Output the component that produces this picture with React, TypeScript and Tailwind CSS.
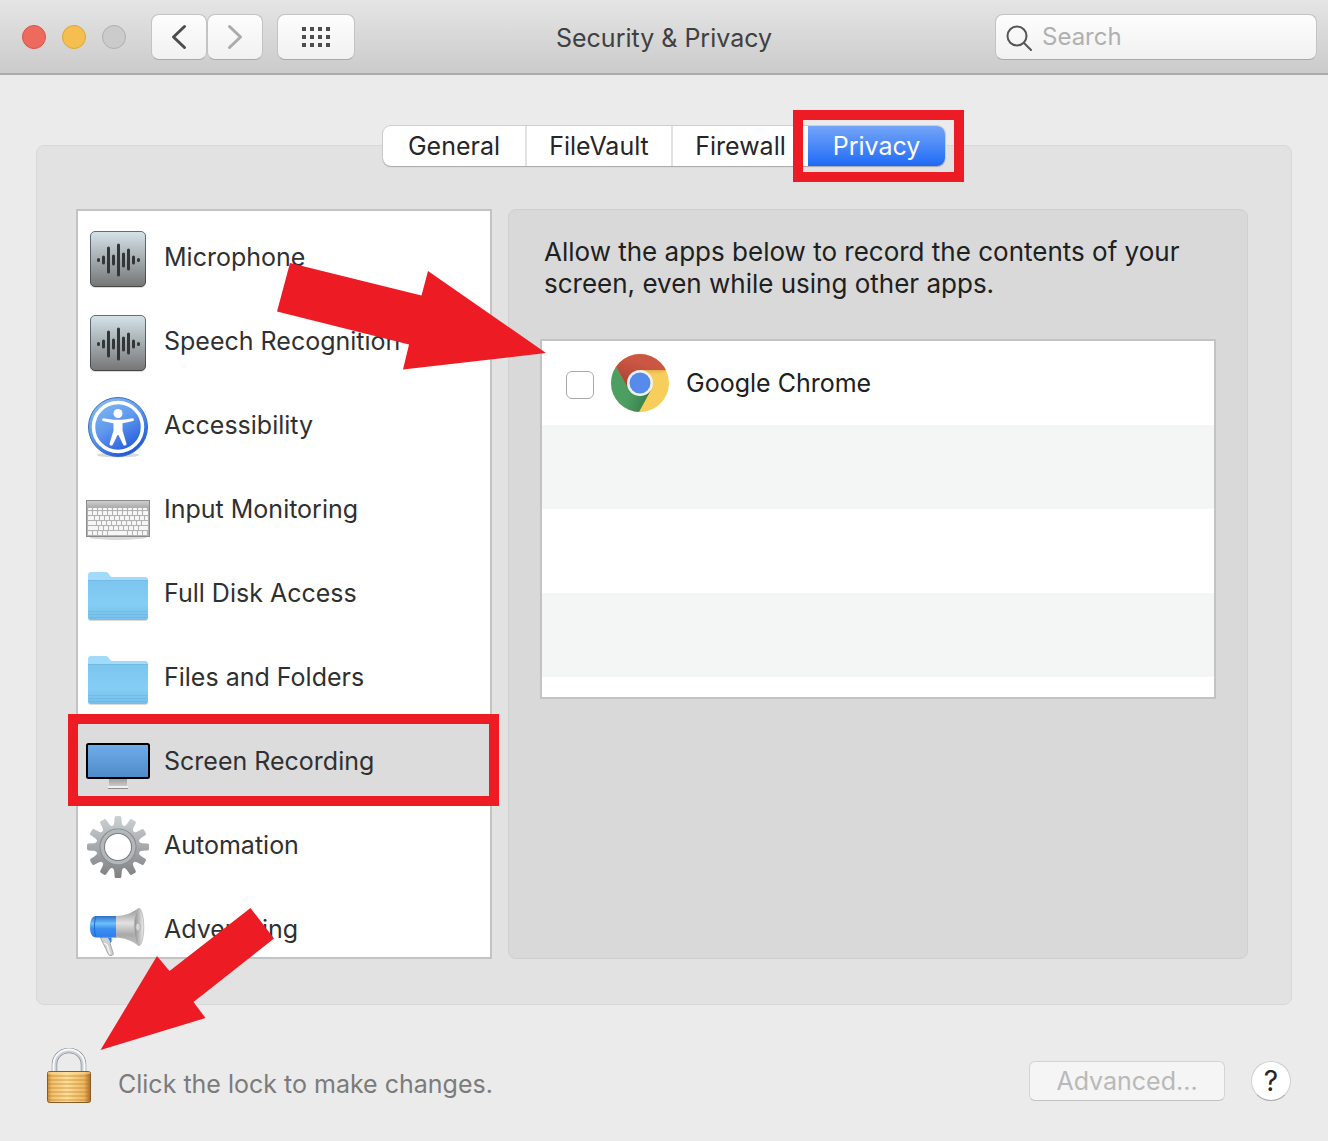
import React, { useState } from 'react';
import clsx from 'clsx';

const tabs = [
  { name: 'General', width: 'w-36' },
  { name: 'FileVault', width: 'w-[146px]' },
  { name: 'Firewall', width: 'w-[135px]' },
  { name: 'Privacy', width: 'w-[137px]' },
];

const WaveIcon = () => (
  <svg viewBox="0 0 64 64" className="h-16 w-16 shrink-0 overflow-visible" aria-hidden="true">
    <defs>
      <linearGradient id="wave-bg" x1="0" y1="0" x2="0" y2="1">
        <stop offset="0" stopColor="#d5e3e9" />
        <stop offset="0.5" stopColor="#a5adb0" />
        <stop offset="1" stopColor="#757575" />
      </linearGradient>
      <linearGradient id="wave-edge" x1="0" y1="0" x2="0" y2="1">
        <stop offset="0" stopColor="#5c7080" />
        <stop offset="1" stopColor="#484848" />
      </linearGradient>
    </defs>
    <rect x="4" y="7" width="56" height="56" rx="5" fill="#000" opacity="0.15" />
    <rect x="4.5" y="6.5" width="55" height="55" rx="4.5" fill="url(#wave-bg)" stroke="url(#wave-edge)" />
    <g stroke="#333638" strokeWidth="3" strokeLinecap="round">
      <path d="M12.5 34.5v1M17.5 32v6M22.500 23v24M27.500 31v8M32.500 20v30M37.500 29v12M42.500 25v19M47.500 32v6M52.500 34.500v1" />
    </g>
  </svg>
);

const AccessibilityIcon = () => (
  <svg viewBox="0 0 64 64" className="h-16 w-16 shrink-0 overflow-visible" aria-hidden="true">
    <defs>
      <linearGradient id="acc-bg" x1="0.2" y1="0" x2="0.8" y2="1">
        <stop offset="0" stopColor="#86bcf3" />
        <stop offset="0.45" stopColor="#5f98ed" />
        <stop offset="1" stopColor="#164bd8" />
      </linearGradient>
    </defs>
    <ellipse cx="32" cy="62" rx="21" ry="2.500" fill="#000" opacity="0.15" />
    <circle cx="32" cy="34" r="29.500" fill="url(#acc-bg)" stroke="#3b6fb9" />
    <circle cx="32" cy="34" r="24.500" fill="none" stroke="#fff" strokeWidth="3.500" />
    <circle cx="32" cy="20.500" r="4.500" fill="#fff" />
    <path
      d="M17.500 25.200c4 .8 8 1.500 14.500 1.500s10.500-.7 14.500-1.500c1.500-.2 2 2.400.4 2.800-3.500 1-7 1.500-10.400 2.200v7.300l4 13.200c.4 1.800-2.500 2.700-3.300 1L32.500 42h-1l-4.700 9.700c-.8 1.700-3.700.8-3.300-1l4-13.200v-7.300c-3.400-.7-6.900-1.200-10.400-2.200-1.600-.4-1.100-3 .4-2.800z"
      fill="#fff"
    />
  </svg>
);

const keyRows = [
  { y: 31, h: 2, widths: [4, 4, 4, 4, 4, 4, 4, 4, 4, 4, 4, 4, 4] },
  { y: 34, h: 4, widths: [4, 4, 4, 4, 4, 4, 4, 4, 4, 4, 4, 9] },
  { y: 39, h: 4, widths: [6, 4, 4, 4, 4, 4, 4, 4, 4, 4, 4, 7] },
  { y: 44, h: 4, widths: [8, 4, 4, 4, 4, 4, 4, 4, 4, 4, 10] },
  { y: 49, h: 4, widths: [10, 4, 4, 4, 4, 4, 4, 4, 4, 13] },
  { y: 54, h: 4, widths: [4, 4, 4, 4, 19, 4, 4, 4, 4] },
];

const KeyboardIcon = () => (
  <svg viewBox="0 0 64 64" className="h-16 w-16 shrink-0 overflow-visible" aria-hidden="true">
    <defs>
      <linearGradient id="kb-bg" x1="0" y1="0" x2="0" y2="1">
        <stop offset="0" stopColor="#d2d2d2" />
        <stop offset="0.17" stopColor="#b0b0b0" />
        <stop offset="1" stopColor="#b4b4b4" />
      </linearGradient>
    </defs>
    <ellipse cx="32" cy="60" rx="29" ry="3" fill="#000" opacity="0.15" />
    <rect x="0.500" y="23.500" width="63" height="36" fill="url(#kb-bg)" stroke="#8b8b8b" />
    {keyRows.map((row) => {
      let x = 2;
      return row.widths.map((w, i) => {
        const left = x;
        x += w + 1;
        return (
          <rect key={`${row.y}-${i}`} x={left} y={row.y} width={Math.min(w, 62 - left)} height={row.h} rx="0.600" fill="#f6f6f6" />
        );
      });
    })}
  </svg>
);

const FolderIcon = () => (
  <svg viewBox="0 0 64 64" className="h-16 w-16 shrink-0 overflow-visible" aria-hidden="true">
    <defs>
      <linearGradient id="folder-front" x1="0" y1="0" x2="0" y2="1">
        <stop offset="0" stopColor="#7cc5ef" />
        <stop offset="0.6" stopColor="#84cdf5" />
        <stop offset="1" stopColor="#75bfe9" />
      </linearGradient>
    </defs>
    <rect x="2" y="20" width="60" height="40" rx="3" fill="#000" opacity="0.15" />
    <path d="M2 14a3 3 0 0 1 3-3h14c2 0 2.800.6 3.800 2l1.200 1.800c.7 1 1.300 1.200 2.500 1.200H59a3 3 0 0 1 3 3v6H2z" fill="#a2daf9" />
    <path d="M2 19h60v37a3 3 0 0 1-3 3H5a3 3 0 0 1-3-3z" fill="url(#folder-front)" />
    <path d="M2 19.500h60M2.500 50.500h59M2.500 53.500h59M3 56.500h58" stroke="#62add8" strokeWidth="0.700" opacity="0.600" />
  </svg>
);

const MonitorIcon = () => (
  <svg viewBox="0 0 64 64" className="h-16 w-16 shrink-0 overflow-visible" aria-hidden="true">
    <defs>
      <linearGradient id="screen" x1="0" y1="0" x2="0" y2="1">
        <stop offset="0" stopColor="#71adea" />
        <stop offset="1" stopColor="#4d8ac8" />
      </linearGradient>
      <linearGradient id="stand" x1="0" y1="0" x2="0" y2="1">
        <stop offset="0" stopColor="#9a9a9a" />
        <stop offset="1" stopColor="#cfcfcf" />
      </linearGradient>
    </defs>
    <rect x="23" y="49" width="18" height="9" fill="url(#stand)" />
    <rect x="22" y="57" width="20" height="2" fill="#f2f2f2" />
    <rect x="22" y="59" width="20" height="1" fill="#8e8e8e" />
    <rect x="1" y="15" width="62" height="34" rx="1.500" fill="url(#screen)" stroke="#000" strokeWidth="2" />
  </svg>
);

const teeth = [0, 30, 60, 90, 120, 150, 180, 210, 240, 270, 300, 330];

const GearIcon = () => (
  <svg viewBox="0 0 64 64" className="h-16 w-16 shrink-0 overflow-visible" aria-hidden="true">
    <defs>
      <linearGradient id="gear-fill" gradientUnits="userSpaceOnUse" x1="0" y1="3" x2="0" y2="65">
        <stop offset="0" stopColor="#ccd2d4" />
        <stop offset="0.5" stopColor="#a6a9ab" />
        <stop offset="1" stopColor="#7d7f81" />
      </linearGradient>
      <mask id="gear-mask" maskUnits="userSpaceOnUse" x="-2" y="0" width="68" height="68">
        <circle cx="32" cy="34" r="22" fill="#fff" />
        {teeth.map((angle) => (
          <path
            key={angle}
            d="M26 13.500Q28 12.500 28.200 10l.4-5.500Q28.800 3 30 3h4q1.200 0 1.400 1.500l.4 5.500q.2 2.500 2.200 3.500z"
            fill="#fff"
            transform={`rotate(${angle} 32 34)`}
          />
        ))}
        <circle cx="32" cy="34" r="13" fill="#000" />
      </mask>
    </defs>
    <g mask="url(#gear-mask)">
      <rect x="-2" y="0" width="68" height="68" fill="url(#gear-fill)" />
      <circle cx="32" cy="34" r="18" fill="none" stroke="#8b9092" strokeWidth="1.200" />
      <circle cx="32" cy="34" r="15.500" fill="none" stroke="#b3b7b9" strokeWidth="3.500" />
      <circle cx="32" cy="34" r="13.400" fill="none" stroke="#787c7e" strokeWidth="1.200" />
    </g>
  </svg>
);

const MegaphoneIcon = () => (
  <svg viewBox="0 0 64 64" className="h-16 w-16 shrink-0 overflow-visible" aria-hidden="true">
    <defs>
      <linearGradient id="mega-blue" x1="0" y1="0" x2="0" y2="1">
        <stop offset="0" stopColor="#2f6fcb" />
        <stop offset="0.35" stopColor="#6cc0fa" />
        <stop offset="0.6" stopColor="#3b8df0" />
        <stop offset="1" stopColor="#2c7fee" />
      </linearGradient>
      <linearGradient id="mega-cone" x1="0" y1="0" x2="0" y2="1">
        <stop offset="0" stopColor="#8f8f8f" />
        <stop offset="0.4" stopColor="#e2e2e2" />
        <stop offset="0.7" stopColor="#a9a9a9" />
        <stop offset="1" stopColor="#c4c4c4" />
      </linearGradient>
      <linearGradient id="mega-bell" x1="0" y1="0" x2="1" y2="0">
        <stop offset="0" stopColor="#8d8d8d" />
        <stop offset="1" stopColor="#ededed" />
      </linearGradient>
    </defs>
    <path d="M14 40h11l1 4-2 2 3.500 11c-1 2-4 2.200-5 .6L17 46z" fill="#cfcfcf" stroke="#8f8f8f" strokeWidth="0.700" />
    <path d="M22 41h3v5z" fill="#2c7fee" />
    <path d="M18 46l3 2 3 9" fill="none" stroke="#f4f4f4" strokeWidth="1.500" />
    <path d="M10 19h21v21.500H10c-4 0-6-4-6-10.500s2-11 6-11z" fill="url(#mega-blue)" />
    <path d="M10 19.500c-2 4-2 17 0 20.500" fill="none" stroke="#1d5db8" strokeWidth="0.800" />
    <path d="M30 19c8 0 16-3 23-8v38c-7-5-15-8.500-23-8.500z" fill="url(#mega-cone)" />
    <ellipse cx="53" cy="30" rx="4.800" ry="18.700" fill="url(#mega-bell)" stroke="#b9b9b9" strokeWidth="0.800" />
    <ellipse cx="52" cy="30" rx="2.300" ry="4" fill="#d8d8d8" stroke="#999" strokeWidth="0.600" />
  </svg>
);

const ChromeIcon = () => (
  <svg viewBox="0 0 58 58" className="h-[58px] w-[58px] shrink-0" aria-hidden="true">
    <defs>
      <clipPath id="chrome-clip">
        <circle cx="29" cy="29" r="29" />
      </clipPath>
      <linearGradient id="chrome-yellow-shade" x1="0" y1="0" x2="0" y2="1">
        <stop offset="0" stopColor="#c88d31" stopOpacity="0.450" />
        <stop offset="0.6" stopColor="#f7cd5c" stopOpacity="0" />
      </linearGradient>
      <linearGradient id="chrome-red" x1="0.600" y1="0.300" x2="0.250" y2="1">
        <stop offset="0" stopColor="#cb5644" />
        <stop offset="1" stopColor="#a93f31" />
      </linearGradient>
      <linearGradient id="chrome-green" x1="0.500" y1="0.500" x2="1" y2="0.700">
        <stop offset="0" stopColor="#4d9e62" />
        <stop offset="1" stopColor="#357d49" />
      </linearGradient>
    </defs>
    <g clipPath="url(#chrome-clip)">
      <rect width="58" height="58" fill="#f7cd5c" />
      <path d="M29 16h27l-16 10z" fill="url(#chrome-yellow-shade)" />
      <path d="M0 4L5 13l13 22 11 7 11-6-12 22H0z" fill="url(#chrome-green)" />
      <path d="M5 13L0 4V0h58v16H29L18 32l-1 2z" fill="url(#chrome-red)" />
    </g>
    <circle cx="29" cy="29" r="13" fill="#f1f1f1" />
    <circle cx="29" cy="29" r="10.500" fill="#568bec" />
  </svg>
);

const LockIcon = () => (
  <svg viewBox="0 0 46 66" className="h-[66px] w-[46px]" aria-hidden="true">
    <defs>
      <linearGradient id="lock-body" x1="0" y1="0" x2="1" y2="0">
        <stop offset="0" stopColor="#c98c3a" />
        <stop offset="0.100" stopColor="#f3c069" />
        <stop offset="0.450" stopColor="#fddd96" />
        <stop offset="0.850" stopColor="#efb95e" />
        <stop offset="1" stopColor="#a86d29" />
      </linearGradient>
    </defs>
    <path d="M8.500 25V16.500a14.500 14 0 0 1 29 0V25" fill="none" stroke="#8a9095" strokeWidth="5.500" />
    <path d="M8.500 25V16.500a14.500 14 0 0 1 29 0V25" fill="none" stroke="#cbd2d8" strokeWidth="4" />
    <path d="M7.500 25V16.500a15.500 15 0 0 1 31 0V25" fill="none" stroke="#f8fafb" strokeWidth="2" />
    <rect x="1.500" y="23.500" width="43" height="31" rx="2" fill="url(#lock-body)" stroke="#8c5a24" />
    <path d="M2 28h42M2 32h42M2 36h42M2 40h42M2 44h42M2 48h42M2 52h42" stroke="#b3762a" strokeWidth="1.200" opacity="0.600" />
    <path d="M2 25h42" stroke="#fbe0a6" />
  </svg>
);

const categories = [
  { name: 'Microphone', icon: WaveIcon },
  { name: 'Speech Recognition', icon: WaveIcon },
  { name: 'Accessibility', icon: AccessibilityIcon },
  { name: 'Input Monitoring', icon: KeyboardIcon },
  { name: 'Full Disk Access', icon: FolderIcon },
  { name: 'Files and Folders', icon: FolderIcon },
  { name: 'Screen Recording', icon: MonitorIcon },
  { name: 'Automation', icon: GearIcon },
  { name: 'Advertising', icon: MegaphoneIcon },
];

const toolbarButton =
  'flex h-[46px] items-center justify-center rounded-lg border border-[#c3c3c3] border-b-[#a9a9a9] bg-linear-to-b from-[#fdfdfd] to-[#f1f1f1]';

const TitleBar: React.FC = () => {
  const [query, setQuery] = useState('');

  return (
    <header className="grid h-[75px] grid-cols-[1fr_auto_1fr] items-center border-b-2 border-[#ababab] bg-linear-to-b from-[#e5e5e5] to-[#cbcbcb] px-[11px]">
      <div className="flex items-center pl-[11px]">
        <div className="flex gap-4">
          <button aria-label="Close" className="h-6 w-6 rounded-full border border-[#d6544a] bg-[#ed6a5f]" />
          <button aria-label="Minimize" className="h-6 w-6 rounded-full border border-[#dba53d] bg-[#f5bf4f]" />
          <button aria-label="Zoom" disabled className="h-6 w-6 rounded-full border border-[#afafaf] bg-[#cbcbcb]" />
        </div>
        <div className="ml-[25px] flex">
          <button aria-label="Back" className={clsx(toolbarButton, 'w-14')}>
            <svg width="16" height="26" viewBox="0 0 16 26" fill="none" stroke="#4d4d4d" strokeWidth="3" strokeLinecap="round" strokeLinejoin="round">
              <path d="M13.500 2.500L2.500 13l11 10.500" />
            </svg>
          </button>
          <button aria-label="Forward" className={clsx(toolbarButton, 'w-14')}>
            <svg width="16" height="26" viewBox="0 0 16 26" fill="none" stroke="#ababab" strokeWidth="3" strokeLinecap="round" strokeLinejoin="round">
              <path d="M2.500 2.500L13.500 13l-11 10.500" />
            </svg>
          </button>
        </div>
        <button aria-label="Show All" className={clsx(toolbarButton, 'ml-[14px] w-[78px]')}>
          <svg width="28" height="20" viewBox="0 0 28 20" fill="#4d4d4d">
            {[0, 8, 16].map((y) => [0, 8, 16, 24].map((x) => <rect key={`${x}-${y}`} x={x} y={y} width="4" height="4" />))}
          </svg>
        </button>
      </div>

      <h1 className="pt-1 text-[25px] text-[#404040]">Security &amp; Privacy</h1>

      <label className="flex h-[46px] w-[322px] items-center gap-2 justify-self-end rounded-lg border border-[#c3c3c3] border-b-[#a9a9a9] bg-linear-to-b from-[#fdfdfd] to-[#f1f1f1] pr-3 pl-[10px]">
        <svg width="28" height="28" viewBox="0 0 28 28" fill="none" stroke="#555" strokeWidth="2" strokeLinecap="round" className="shrink-0" aria-hidden="true">
          <circle cx="11" cy="13" r="9.500" />
          <path d="M18 20l7 7" />
        </svg>
        <input
          type="text"
          aria-label="Search"
          placeholder="Search"
          value={query}
          onChange={(e) => setQuery(e.target.value)}
          className="w-full min-w-0 bg-transparent text-[24px] text-[#404040] outline-none placeholder:text-[#b0b0b0]"
        />
      </label>
    </header>
  );
};

const TabBar: React.FC = () => {
  const [active, setActive] = useState('Privacy');

  return (
    <div role="tablist" className="-mt-5 flex h-10 self-center rounded-lg bg-white text-[25px] text-[#262626] shadow-[0_1px_1px_#a8a8a8,0_0_0_1px_#cfcfcf]">
      {tabs.map((tab, index) => (
        <div key={tab.name} className={clsx('relative', tab.width)}>
          <button
            role="tab"
            aria-selected={active === tab.name}
            onClick={() => setActive(tab.name)}
            className={clsx(
              'h-full w-full pt-0.5',
              index < 2 && 'border-r-2 border-[#e2e2e2]',
              active === tab.name && 'rounded-r-lg bg-linear-to-b from-[#73a4f7] to-[#1c69f6] text-white',
            )}
          >
            {tab.name}
          </button>
          {tab.name === 'Privacy' && (
            <div className="pointer-events-none absolute -top-4 -right-[19px] -bottom-4 -left-[15px] border-10 border-[#ed1c24]" />
          )}
        </div>
      ))}
    </div>
  );
};

const CategoryList: React.FC = () => {
  const [selected, setSelected] = useState('Screen Recording');

  return (
    <div className="relative w-[416px] shrink-0">
      <ul className="h-[750px] overflow-hidden border-2 border-[#c3c3c3] bg-white pt-1">
        {categories.map(({ name, icon: Icon }) => (
          <li key={name}>
            <button
              onClick={() => setSelected(name)}
              className={clsx(
                'flex h-21 w-full items-center gap-[14px] pl-2 text-left text-[25px] text-[#303030]',
                selected === name && 'bg-[#dcdcdc]',
              )}
            >
              <Icon />
              <span className="pt-0.5">{name}</span>
            </button>
          </li>
        ))}
      </ul>

      {/* Callouts drawn over the list */}
      <div className="pointer-events-none absolute top-[505px] -right-[7px] -left-2 h-[92px] border-10 border-[#ed1c24]" />
      <svg width="272" height="110" viewBox="0 0 272 110" className="pointer-events-none absolute top-[53px] left-[200px] z-10" aria-hidden="true">
        <path d="M14 1L145.500 33.500 152 9 270 91 127 107.500 133 82.500 1 49.500z" fill="#ed1c24" />
      </svg>
      <svg width="176" height="144" viewBox="0 0 176 144" className="pointer-events-none absolute top-[698px] left-6 z-10" aria-hidden="true">
        <path d="M150.500 1L174 31.500 93.500 95 105.500 111 .5 143 57 49 69.500 64z" fill="#ed1c24" />
      </svg>
    </div>
  );
};

const AppPermissions: React.FC = () => {
  const [allowed, setAllowed] = useState(false);

  return (
    <section className="flex-1 rounded-lg border border-[#cfcfcf] bg-[#d9d9d9] px-[31px] pt-[26px]">
      <p className="max-w-[660px] pl-1 text-[26px] leading-8 text-[#202020]">
        Allow the apps below to record the contents of your screen, even while using other apps.
      </p>
      <ul className="mt-[39px] h-[360px] border-2 border-[#c3c3c3] bg-white">
        <li className="h-21">
          <label className="flex h-full items-center pl-6 text-[25px] text-[#202020]">
            <input
              type="checkbox"
              checked={allowed}
              onChange={(e) => setAllowed(e.target.checked)}
              className="mt-1 h-7 w-7 appearance-none rounded-md border border-[#a9a9a9] bg-white checked:bg-[#1c69f6]"
            />
            <span className="mr-[17px] ml-[17px]">
              <ChromeIcon />
            </span>
            <span className="pt-0.5">Google Chrome</span>
          </label>
        </li>
        <li className="h-21 bg-[#f4f5f5]" />
        <li className="h-21" />
        <li className="h-21 bg-[#f4f5f5]" />
      </ul>
    </section>
  );
};

export default function App() {
  return (
    <div className="min-h-screen bg-[#ebebeb] font-[Inter,sans-serif]">
      <TitleBar />

      <main className="mx-9 mt-[70px] flex flex-col rounded-lg border border-[#d8d8d8] bg-[#e2e2e2] pb-[45px]">
        <TabBar />
        <div className="mt-[43px] flex gap-4 pr-[43px] pl-[39px]">
          <CategoryList />
          <AppPermissions />
        </div>
      </main>

      <footer className="mt-[43px] flex items-center justify-between pr-[37px] pl-[46px]">
        <div className="flex items-center gap-[26px]">
          <button aria-label="Unlock">
            <LockIcon />
          </button>
          <p className="pt-2 text-[25px] text-[#7b7b7b]">Click the lock to make changes.</p>
        </div>
        <div className="flex items-center gap-[26px]">
          <button disabled className="h-10 w-[196px] rounded-md border border-[#d4d4d4] border-b-[#c2c2c2] bg-[#f5f5f5] text-[25px] leading-8 text-[#b9b9b9]">
            Advanced...
          </button>
          <button aria-label="Help" className="h-10 w-10 rounded-full border border-[#cfcfcf] border-b-[#a9a9a9] bg-white text-[28px] leading-8 text-[#262626]">
            ?
          </button>
        </div>
      </footer>
    </div>
  );
}
